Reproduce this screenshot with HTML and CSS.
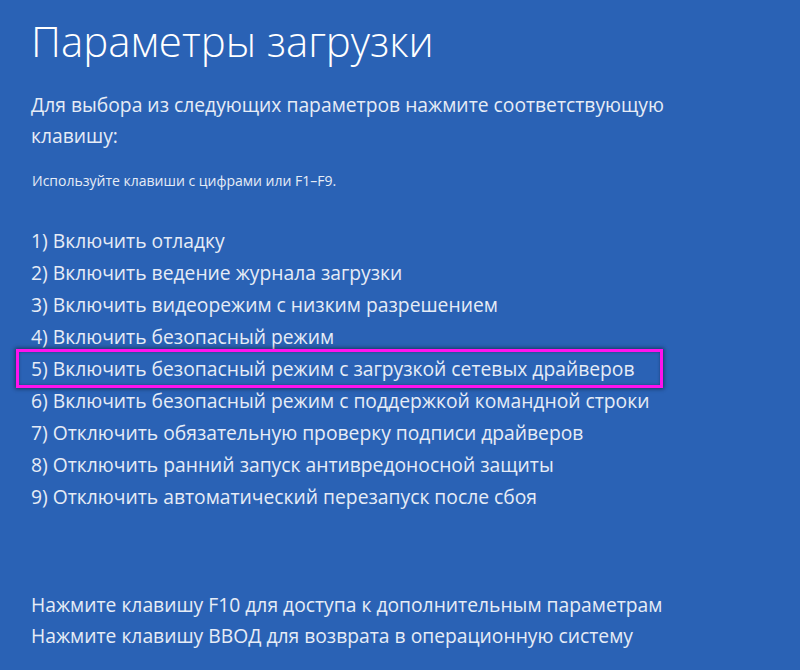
FILE: index.html
```html
<!DOCTYPE html>
<html lang="ru">
<head>
<meta charset="utf-8">
<title>Параметры загрузки</title>
<link rel="stylesheet" href="styles.css">
</head>
<body>
<main class="screen">
  <h1 class="title">Параметры загрузки</h1>
  <p class="lead">Для выбора из следующих параметров нажмите соответствующую клавишу:</p>
  <p class="hint">Используйте клавиши с цифрами или F1–F9.</p>
  <ol class="options">
    <li class="option">1) Включить отладку</li>
    <li class="option">2) Включить ведение журнала загрузки</li>
    <li class="option">3) Включить видеорежим с низким разрешением</li>
    <li class="option">4) Включить безопасный режим</li>
    <li class="option option-selected">5) Включить безопасный режим с загрузкой сетевых драйверов</li>
    <li class="option">6) Включить безопасный режим с поддержкой командной строки</li>
    <li class="option">7) Отключить обязательную проверку подписи драйверов</li>
    <li class="option">8) Отключить ранний запуск антивредоносной защиты</li>
    <li class="option">9) Отключить автоматический перезапуск после сбоя</li>
  </ol>
  <div class="footer">
    <p class="footer-line">Нажмите клавишу F10 для доступа к дополнительным параметрам</p>
    <p class="footer-line">Нажмите клавишу ВВОД для возврата в операционную систему</p>
  </div>
</main>
</body>
</html>
```
FILE: styles.css
```css
html, body {
  margin: 0;
  padding: 0;
  background: #2a62b5;
}
body {
  width: 800px;
  height: 670px;
  overflow: hidden;
  font-family: "Open Sans", "Noto Sans", "DejaVu Sans", sans-serif;
  color: #e6ecf6;
}
.screen {
  padding: 13px 0 0 31px;
  display: flex;
  flex-direction: column;
}
.title {
  margin: 0;
  font-size: 42px;
  font-weight: 300;
  line-height: 56px;
  color: #ffffff;
}
.lead {
  margin: 20px 0 0 0;
  font-size: 19.3px;
  line-height: 31px;
  width: 680px;
}
.hint {
  margin: 20px 0 0 1px;
  font-size: 14px;
  line-height: 20px;
}
.options {
  list-style: none;
  margin: 34px 0 0 0;
  padding: 0;
}
.option {
  font-size: 19.3px;
  line-height: 32px;
  position: relative;
}
.option-selected::before {
  content: "";
  position: absolute;
  left: -15px;
  top: -4px;
  width: 647px;
  height: 39px;
  box-sizing: border-box;
  border: 3px solid #ff12ee;
  box-shadow: 0 0 4px 1px rgba(0, 0, 0, 0.45), inset 0 0 3px rgba(0, 0, 0, 0.35);
}
.footer {
  margin-top: 76px;
}
.footer-line {
  margin: 0;
  font-size: 19.3px;
  line-height: 31px;
}
```
